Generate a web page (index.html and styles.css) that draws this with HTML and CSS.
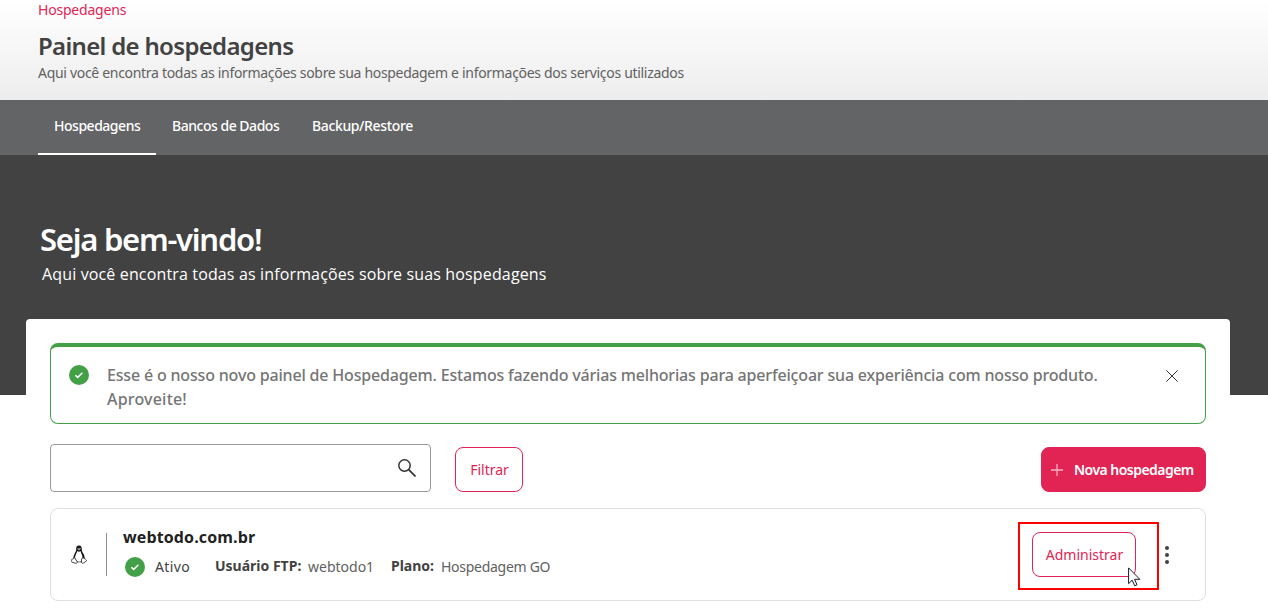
FILE: index.html
```html
<!DOCTYPE html>
<html lang="pt-BR">
<head>
<meta charset="utf-8">
<title>Painel de hospedagens</title>
<link rel="stylesheet" href="styles.css">
</head>
<body>
<header class="header">
  <a class="breadcrumb">Hospedagens</a>
  <h1 class="title">Painel de hospedagens</h1>
  <p class="subtitle">Aqui você encontra todas as informações sobre sua hospedagem e informações dos serviços utilizados</p>
</header>
<nav class="tabs">
  <a class="tab tab-active"><span class="tab-text">Hospedagens</span></a>
  <a class="tab tab-banks"><span class="tab-text">Bancos de Dados</span></a>
  <a class="tab tab-backup"><span class="tab-text">Backup/Restore</span></a>
</nav>
<section class="hero">
  <h2 class="hero-title">Seja bem-vindo!</h2>
  <p class="hero-text">Aqui você encontra todas as informações sobre suas hospedagens</p>
</section>
<main class="panel">
  <div class="alert">
    <svg class="check" viewBox="0 0 20 20"><circle cx="10" cy="10" r="10" fill="#43a047"/><path d="M6.4 10.2l2.3 2.2 4.7-4.6" fill="none" stroke="#fff" stroke-width="1.5"/></svg>
    <p class="alert-text"><span class="alert-line">Esse é o nosso novo painel de Hospedagem. Estamos fazendo várias melhorias para aperfeiçoar sua experiência com nosso produto.</span><br><span class="alert-last">Aproveite!</span></p>
    <svg class="close" viewBox="0 0 12 12"><path d="M.3.3l11.4 11.4M11.7.3L.3 11.7" stroke="#333" stroke-width="1"/></svg>
  </div>
  <div class="toolbar">
    <div class="search">
      <svg class="search-icon" viewBox="0 0 18 18"><circle cx="6.5" cy="6.5" r="5.7" fill="none" stroke="#333" stroke-width="1.5"/><path d="M10.7 10.7l6.8 6.8" stroke="#333" stroke-width="1.7"/></svg>
    </div>
    <button class="btn btn-filter">Filtrar</button>
    <button class="btn btn-new"><svg class="plus" viewBox="0 0 12 12"><path d="M6 0v12M0 6h12" stroke="#fff" stroke-opacity=".65" stroke-width="1.3"/></svg><span>Nova hospedagem</span></button>
  </div>
  <article class="card">
    <svg class="tux" viewBox="0 0 16 19">
      <path d="M8 .5C5.700.5 5 2 5.200 4.300c.1 1.700-.5 2.500-1.500 4.200C2.800 10.200 2.300 11.800 2.300 13.300L5 17.300h6l2.700-4c0-2-.7-3.600-1.700-5.200-.8-1.300-1.200-2.100-1.200-3.800C10.800 1.700 10 .5 8 .5z" fill="#111"/>
      <path d="M6.300 6.100c.8.800 2.100.8 3.200-.1.300 1.600 1.600 3.600 1.900 5.500.2 1.500.1 3.300-.6 4.600-1.500 1-4 .9-5.300 0-1.200-1.700-1.800-3.300-1.200-5.200.5-1.600 1.600-3 2-4.800z" fill="#fff"/>
      <path d="M3.500 12.600l2.700 4.100c.2.900-.5 1.800-1.600 1.600L.8 17.100c-.6-.3-.1-1.200-.2-2.200 0-.8.9-.6 1.600-1 .5-.4.600-1.300 1.300-1.300zM12.300 12.900c.6.100.8.700 1.500.9.600.2.800.7 1.600 1.200.4.400.3.900-.3 1.300l-2.700 1.700c-.9.500-2 .2-2-.8l.2-3.200c.1-.7.900-1.100 1.700-1.100z" fill="#fff" stroke="#333" stroke-width=".9"/>
      <path d="M6.400 4.600l1.500-.8 1.600.7-1.600 1z" fill="#aaa"/><circle cx="7" cy="3.300" r=".5" fill="#fff"/><circle cx="9" cy="3.300" r=".6" fill="#fff"/>
    </svg>
    <span class="divider"></span>
    <div class="info">
      <h3 class="domain"><span>webtodo.com.br</span></h3>
      <div class="meta">
        <svg class="check" viewBox="0 0 20 20"><circle cx="10" cy="10" r="10" fill="#43a047"/><path d="M6.400 10.200l2.300 2.200 4.700-4.600" fill="none" stroke="#fff" stroke-width="1.500"/></svg>
        <span class="status">Ativo</span>
        <span class="label label-ftp">Usuário FTP:</span><span class="value value-ftp">webtodo1</span>
        <span class="label label-plan">Plano:</span><span class="value value-plan">Hospedagem GO</span>
      </div>
    </div>
    <div class="highlight">
      <button class="btn btn-admin">Administrar</button>
      <svg class="cursor" viewBox="0 0 13 20"><path d="M.6.900v15.800l3.600-3.500 2.500 5.600 2.300-1-2.400-5.500h5.200z" fill="#fff" stroke="#1a1a2a" stroke-width="1"/></svg>
    </div>
    <svg class="dots" viewBox="0 0 4 18"><g fill="#424242"><circle cx="2" cy="2" r="2"/><circle cx="2" cy="9" r="2"/><circle cx="2" cy="16" r="2"/></g></svg>
  </article>
</main>
</body>
</html>
```
FILE: styles.css
```css
* { box-sizing: border-box; margin: 0; padding: 0; }
body { height: 611px; overflow: hidden; background: #fff; font-family: "Noto Sans", "Open Sans", sans-serif; font-size: 14px; white-space: nowrap; }
svg { display: block; flex: none; }
.header { height: 100px; padding: 0 38px; background: linear-gradient(#fff, #ededed); }
.breadcrumb { display: block; height: 20px; line-height: 20px; font-size: 14px; letter-spacing: -.2px; color: #e12454; }
.title { height: 32px; margin-top: 11px; line-height: 30px; font-size: 24px; font-weight: 600; letter-spacing: -.68px; color: #424242; }
.subtitle { line-height: 20px; font-size: 14px; letter-spacing: -.305px; color: #616161; }
.tabs { display: flex; height: 55px; padding-left: 38px; background: #636466; color: #fff; }
.tab { width: 118px; padding: 16px; line-height: 20px; font-weight: 500; letter-spacing: -.48px; }
.tab-active { border-bottom: 2px solid #fff; }
.tab-banks { width: 140px; }
.tab-backup { width: 134px; letter-spacing: -.37px; }
.hero { height: 240px; padding: 64px 40px 0; background: #424242; color: #fff; }
.hero-title { height: 42px; line-height: 40px; font-size: 31px; font-weight: 600; letter-spacing: -1.25px; }
.hero-text { padding: 1px 0 0 2px; line-height: 24px; font-family: "Open Sans", sans-serif; font-size: 16px; letter-spacing: .145px; }
.panel { width: 1204px; height: 292px; margin: -76px 0 0 26px; padding: 24px; border-radius: 4px; background: #fff; }
.alert { display: flex; height: 81px; padding: 16px 27px 0 18px; border: 1px solid #43a047; border-top-width: 4px; border-radius: 8px; }
.check { width: 20px; height: 20px; }
.alert .check { margin-top: 2px; }
.alert-text { flex: 1; margin-left: 18px; line-height: 24px; font-size: 16px; font-weight: 500; letter-spacing: -.176px; color: #757575; }
.alert-last { letter-spacing: .2px; }
.close { width: 12px; height: 12px; margin-top: 7px; }
.toolbar { display: flex; align-items: flex-end; height: 48px; margin-top: 20px; }
.search { display: flex; justify-content: flex-end; width: 381px; height: 48px; padding: 14px; border: 1px solid #999; border-radius: 4px; }
.search-icon { width: 18px; height: 18px; }
.btn { display: flex; align-items: center; justify-content: center; height: 45px; border: 1px solid #e12454; border-radius: 8px; background: #fff; color: #e12454; font: 14px/20px "Noto Sans", sans-serif; white-space: nowrap; }
.btn-filter { width: 68px; margin-left: 24px; padding-left: 1px; }
.btn-new { width: 165px; margin-left: auto; padding-left: 9px; justify-content: flex-start; gap: 11px; background: #e12454; color: #fff; font-weight: 600; letter-spacing: -.53px; }
.plus { width: 12px; height: 12px; }
.card { display: flex; height: 93px; margin-top: 16px; padding-left: 20px; border: 1px solid #dedede; border-radius: 8px; }
.tux { width: 16px; height: 19px; margin-top: 36px; }
.divider { width: 1px; height: 43px; margin: 24px 0 0 19px; background: #8d8d94; }
.info { width: 440px; margin: 16px 0 0 16px; }
.domain { height: 24px; line-height: 24px; font-family: "Open Sans", sans-serif; font-size: 16px; font-weight: 700; letter-spacing: .14px; color: #212121; }
.meta { display: flex; height: 20px; margin: 8px 0 0 2px; line-height: 20px; color: #424242; }
.status { width: 60px; margin-left: 10px; letter-spacing: .4px; }
.label { margin-top: -1px; font-weight: 700; }
.label-ftp { width: 93px; }
.label-plan { width: 50px; }
.value { color: #616161; }
.value-ftp { width: 83px; }
.value-plan { letter-spacing: -.28px; }
.highlight { position: relative; width: 141px; height: 68px; margin: 13px 0 0 auto; padding: 8px 12px; border: 2px solid #f00; }
.btn-admin { width: 104px; padding-left: 1px; }
.cursor { position: absolute; left: 108px; top: 43px; width: 13px; height: 20px; }
.dots { width: 4px; height: 18px; margin: 37px 36px 0 6px; }
```
